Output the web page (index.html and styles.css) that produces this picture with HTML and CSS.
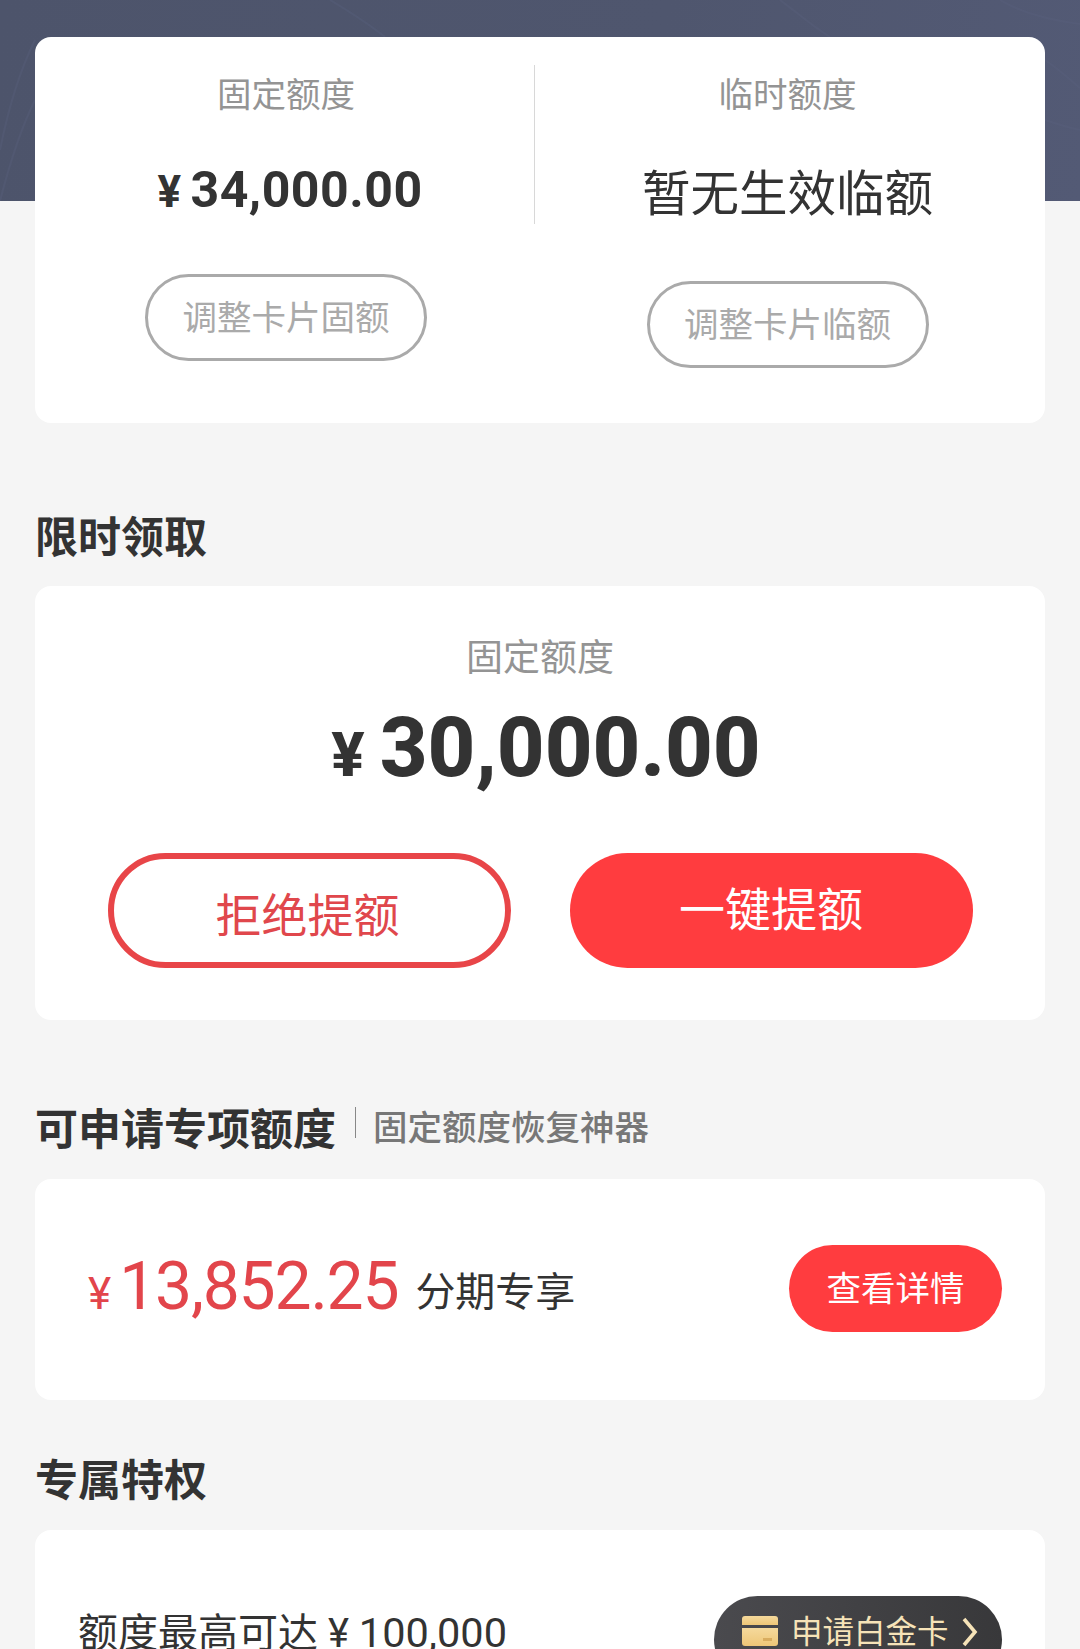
FILE: index.html
```html
<!DOCTYPE html>
<html lang="zh-CN">
<head>
<meta charset="utf-8">
<title>额度</title>
<link rel="stylesheet" href="styles.css">
</head>
<body>
<div class="page">
  <div class="hero">
    <svg class="hero-lines" viewBox="0 0 1080 201" preserveAspectRatio="none" aria-hidden="true">
      <g fill="none" stroke="#5a617e" stroke-width="2" opacity=".35">
        <path d="M0 150C8 110 20 70 35 40"/>
        <path d="M0 201C8 170 20 130 35 100"/>
        <path d="M1045 60C1060 70 1070 80 1080 88"/>
        <path d="M1045 120C1060 125 1070 128 1080 130"/>
        <path d="M780 0C800 15 815 28 830 37"/>
        <path d="M1000 0C1020 12 1050 20 1080 24"/>
        <path d="M330 0C350 12 370 25 385 37"/>
      </g>
    </svg>
  </div>
  <main class="main">
    <section class="card limits">
      <div class="limit limit-fixed">
        <div class="limit-label">固定额度</div>
        <div class="limit-amount"><span class="yen">¥</span>34,000.00</div>
        <button class="ghost">调整卡片固额</button>
      </div>
      <div class="limit limit-temp">
        <div class="limit-label">临时额度</div>
        <div class="limit-none">暂无生效临额</div>
        <button class="ghost">调整卡片临额</button>
      </div>
    </section>

    <h2 class="title title-first">限时领取</h2>
    <section class="card offer">
      <div class="offer-label">固定额度</div>
      <div class="offer-amount"><span class="offer-yen">¥</span>30,000.00</div>
      <div class="offer-actions">
        <button class="btn btn-outline">拒绝提额</button>
        <button class="btn btn-solid">一键提额</button>
      </div>
    </section>

    <div class="title-row">
      <h2 class="title">可申请专项额度</h2>
      <span class="title-sep"></span>
      <span class="title-sub">固定额度恢复神器</span>
    </div>
    <section class="card special">
      <div class="special-left">
        <span class="special-yen">¥</span><span class="special-num">13,852.25</span><span class="special-tag">分期专享</span>
      </div>
      <button class="detail">查看详情</button>
    </section>

    <h2 class="title title-perk">专属特权</h2>
    <section class="card perk">
      <div class="perk-text">额度最高可达 ¥ <span class="perk-num">100,000</span></div>
      <button class="platinum">
        <svg class="platinum-card" viewBox="0 0 36 30" aria-hidden="true">
          <defs><linearGradient id="g" x1="0" y1="0" x2="0" y2="1"><stop offset="0" stop-color="#f5d99c"/><stop offset="1" stop-color="#eec677"/></linearGradient></defs>
          <path d="M3 0h30a3 3 0 0 1 3 3v6H0V3a3 3 0 0 1 3-3z" fill="url(#g)"/>
          <path d="M0 12h36v15a3 3 0 0 1-3 3H3a3 3 0 0 1-3-3z" fill="url(#g)"/>
          <rect x="21" y="22" width="9" height="3" fill="#d9ad5f"/>
        </svg>
        <span class="platinum-text">申请白金卡</span>
        <svg class="platinum-arrow" viewBox="0 0 16 30" aria-hidden="true"><path d="M2 2l11 13L2 28" fill="none" stroke="#f6e3b8" stroke-width="3.6"/></svg>
      </button>
    </section>
  </main>
</div>
</body>
</html>
```
FILE: styles.css
```css
* { box-sizing: border-box; }
html, body { margin: 0; padding: 0; }
body {
  background: #f5f5f5;
  font-family: Roboto, "Noto Sans CJK SC", sans-serif;
  color: #333;
}
.page { height: 1649px; overflow: hidden; }
.hero {
  height: 201px;
  background: linear-gradient(100deg, #4d546b 0%, #4f566e 60%, #535a75 100%);
}
.hero-lines { display: block; width: 100%; height: 100%; }
.main { position: relative; margin-top: -164px; padding: 0 35px; }
.card { background: #fff; border-radius: 16px; }
button { font-family: inherit; padding: 0; background: none; border: 0; }

.limits { display: grid; grid-template-columns: 500px 510px; height: 386px; }
.limit { display: flex; flex-direction: column; align-items: center; }
.limit-fixed { padding-left: 2px; }
.limit-temp { padding-right: 5px; }
.limit-label { margin-top: 38px; font-size: 34.5px; line-height: 40px; color: #949494; }
.limit-amount {
  margin-top: 45px; padding-left: 8px; font-size: 50px; line-height: 60px; font-weight: 700; color: #333;
  letter-spacing: .5px; height: 60px;
}
.yen { font-size: 44px; margin-right: 9px; }
.limit-none { margin-top: 47px; font-size: 48.5px; line-height: 66px; color: #333; }
.ghost {
  width: 282px; height: 87px; border: 3px solid #aaa; border-radius: 44px;
  font-size: 34.5px; color: #aaa; padding-bottom: 5px;
}
.limit-fixed .ghost { margin-top: 54px; }
.limit-temp .ghost { margin-top: 53px; }
.limit-fixed { position: relative; }
.limit-fixed::after {
  content: ""; position: absolute; right: 0; top: 28px; width: 1px; height: 159px; background: #d8d8d8;
}

.title { margin: 0; font-size: 43px; line-height: 50px; font-weight: 700; color: #333; }
.title-first { margin-top: 90px; }

.offer { margin-top: 23px; height: 434px; padding-top: 53px; display: flex; flex-direction: column; align-items: center; }
.offer-label { font-size: 37px; line-height: 40px; color: #949494; }
.offer-amount { margin-top: 19px; padding-left: 12px; font-size: 83px; line-height: 100px; font-weight: 800; color: #333; }
.offer-yen { font-size: 62px; margin-right: 15px; }
.offer-actions { margin-top: 48px; display: flex; gap: 59px; }
.btn { width: 403px; height: 115px; border-radius: 58px; font-size: 46px; }
.btn-outline { border: 6px solid #e84548; color: #e0474c; padding: 2px 3px 0 0; }
.btn-solid { background: #ff3c3f; color: #fff; padding-bottom: 10px; }

.title-row { margin-top: 85px; height: 50px; display: flex; align-items: center; }
.title-sep { width: 1px; height: 31px; margin: 0 17px 16px 19px; background: #888; }
.title-sub { font-size: 34.5px; line-height: 50px; font-weight: 500; color: #777; margin-bottom: 4px; }

.special { margin-top: 24px; height: 221px; padding: 66px 43px 0 53px; display: flex; justify-content: space-between; align-items: flex-start; }
.special-left { display: flex; align-items: baseline; height: 87px; margin-top: -2px; }
.special-yen { font-size: 44px; color: #e2454b; margin-right: 8px; }
.special-num { font-size: 66px; line-height: 87px; color: #e2454b; letter-spacing: -1.2px; }
.special-tag { font-size: 40px; margin-left: 17px; color: #333; transform: translateY(-3px); }
.detail { width: 213px; height: 87px; border-radius: 44px; background: #ff3c3f; color: #fff; font-size: 34.5px; padding-bottom: 5px; }

.title-perk { margin-top: 56px; }
.perk { margin-top: 24px; height: 200px; padding: 66px 43px 0 43px; display: flex; justify-content: space-between; align-items: flex-start; }
.perk-text { font-size: 40px; line-height: 74px; color: #333; }
.perk-num { font-size: 41.5px; }
.platinum {
  width: 288px; height: 87px; border-radius: 44px;
  background: linear-gradient(90deg, #4a4a4e, #38383a);
  display: flex; align-items: flex-start; padding: 20px 0 0 28px;
}
.platinum-card { width: 36px; height: 30px; flex: none; }
.platinum-text { margin: -6px 0 0 13px; font-size: 31.5px; line-height: 46px; color: #f6e3b8; }
.platinum-arrow { width: 16px; height: 30px; margin: 1px 0 0 13px; flex: none; }
```
